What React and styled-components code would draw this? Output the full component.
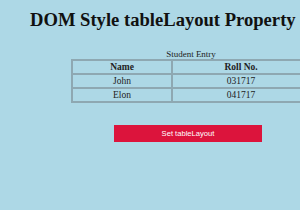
import React from "react";
import styled, { createGlobalStyle } from "styled-components";

const Global = createGlobalStyle`
  html, body { margin: 0; padding: 0; background: #add8e6; }
  body { font-family: "Liberation Serif", "Times New Roman", serif; overflow: hidden; }
`;

const Page = styled.div`
  width: 300px;
  height: 210px;
  display: flex;
  flex-direction: column;
  align-items: flex-start;
`;

const Title = styled.h1`
  margin: 9px 0 0 30px;
  font-size: 18.6px;
  line-height: 22px;
  font-weight: bold;
  color: #111;
  white-space: nowrap;
`;

const Table = styled.table`
  margin: 18px 0 0 71px;
  width: 240px;
  border-collapse: collapse;
  border: 2px solid #7f9aa5;
  flex-shrink: 0;
  font-size: 9.5px;
  color: #222;
`;

const Caption = styled.caption`
  font-size: 9px;
  line-height: 10px;
  color: #222;
`;

const Cell = styled.td`
  border: 2px solid #8ea8b2;
  text-align: center;
  height: 12px;
  padding: 0;
  line-height: 12px;
  font-weight: ${(p) => (p.$head ? "bold" : "normal")};
`;

const Button = styled.button`
  margin: 22px 0 0 114px;
  width: 148px;
  height: 17px;
  border: none;
  background: #dc143c;
  color: #fff;
  font-family: "Liberation Sans", Arial, sans-serif;
  font-size: 7.6px;
  padding: 0;
`;

export default function App() {
  return (
    <Page>
      <Global />
      <Title>DOM Style tableLayout Property</Title>
      <Table>
        <Caption>Student Entry</Caption>
        <tbody>
          <tr>
            <Cell as="th" $head style={{ width: "98px" }}>Name</Cell>
            <Cell as="th" $head>Roll No.</Cell>
          </tr>
          <tr>
            <Cell>John</Cell>
            <Cell>031717</Cell>
          </tr>
          <tr>
            <Cell>Elon</Cell>
            <Cell>041717</Cell>
          </tr>
        </tbody>
      </Table>
      <Button>Set tableLayout</Button>
    </Page>
  );
}
